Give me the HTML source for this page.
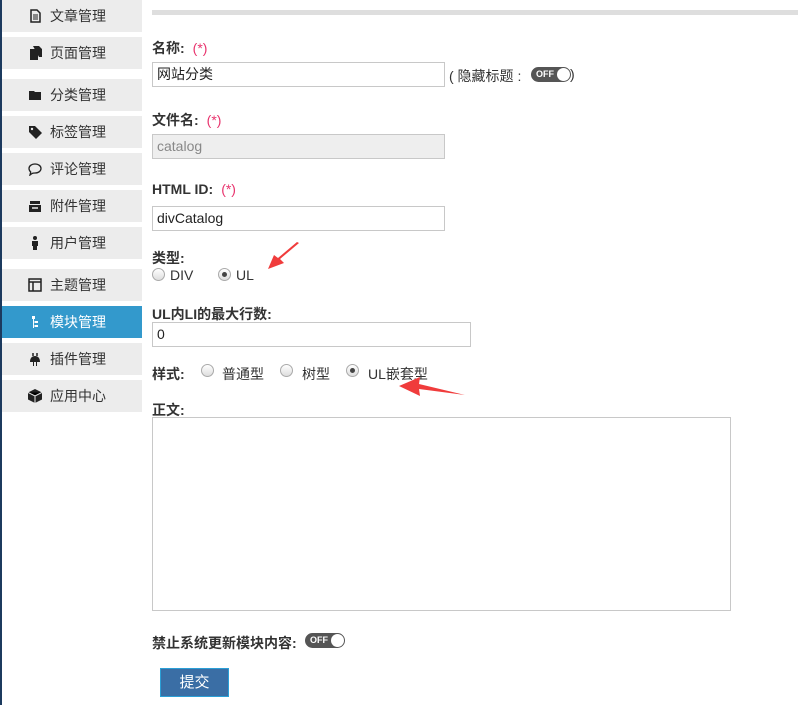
<!DOCTYPE html>
<html><head><meta charset="utf-8"><style>
*{margin:0;padding:0;box-sizing:border-box}
body{width:798px;height:705px;overflow:hidden;background:#fff;position:relative;font-family:"Liberation Sans","Noto Sans CJK SC",sans-serif;font-size:14px;color:#222}
.a{position:absolute}
.strip{left:0;top:0;width:2px;height:705px;background:#1c3a5e}
.it{position:absolute;left:2px;width:140px;height:32px;background:#ececec;font-size:14px;color:#333;line-height:32px;padding-left:48px}
.it .ic{position:absolute;left:26px;top:9px;width:14px;height:14px}
.it.on{background:#3399cc;color:#fff}
.lbl{position:absolute;left:152px;font-weight:bold;font-size:14px;color:#333}
.star{color:#e8336d;font-weight:normal;margin-left:8px}
.inp{position:absolute;left:152px;height:25px;border:1px solid #c8c8c8;background:#fff;font-size:14px;line-height:23px;padding-left:4px;color:#222}
.rad{position:absolute;width:13px;height:13px;border:1px solid #aaa;border-radius:50%;background:linear-gradient(#fff,#ddd)}
.rad.on:after{content:"";position:absolute;left:3px;top:3px;width:5px;height:5px;border-radius:50%;background:#444}
.tog{position:absolute;width:40px;height:15px;border-radius:8px;background:#555;color:#fff;font-size:9px;font-weight:bold;line-height:15px;padding-left:5px}
.tog:after{content:"";position:absolute;right:1px;top:1px;width:13px;height:13px;border-radius:50%;background:#fff}
.t{position:absolute;font-size:14px;color:#333}
</style></head><body>
<div class="a strip"></div>
<div class="a" style="left:152px;top:10px;width:646px;height:5px;background:#dedede"></div>

<div class="it" style="top:0"><svg class="ic" viewBox="0 0 14 14"><path d="M3 1h6l3 3v9H3z" fill="none" stroke="#222" stroke-width="1.5"/><path d="M5 6h5M5 8h5M5 10h5" stroke="#222"/></svg>文章管理</div>
<div class="it" style="top:37px"><svg class="ic" viewBox="0 0 14 14"><path d="M2 3h6l2 2v9H2z M5 0h6l3 3v8h-3" fill="#222"/></svg>页面管理</div>
<div class="it" style="top:79px"><svg class="ic" viewBox="0 0 14 14"><path d="M1 3h5l1 1h6v8H1z" fill="#222"/></svg>分类管理</div>
<div class="it" style="top:116px"><svg class="ic" viewBox="0 0 14 14"><path d="M1 1h6l7 7-6 6-7-7z" fill="#222"/><circle cx="4" cy="4" r="1.2" fill="#ececec"/></svg>标签管理</div>
<div class="it" style="top:153px"><svg class="ic" viewBox="0 0 14 14"><path d="M7 2c3.5 0 6 2 6 4.5S10.5 11 7 11c-1 0-2 0-3 .5L2 13l.7-3C1.6 9 1 8 1 6.5 1 4 3.5 2 7 2z" fill="none" stroke="#222" stroke-width="1.3"/></svg>评论管理</div>
<div class="it" style="top:190px"><svg class="ic" viewBox="0 0 14 14"><path d="M2 2h10v3H2zM1 6h12v7H1z" fill="#222"/><path d="M4 9h6" stroke="#ececec" stroke-width="1.5"/></svg>附件管理</div>
<div class="it" style="top:227px"><svg class="ic" viewBox="0 0 14 14"><circle cx="7" cy="2" r="2" fill="#222"/><path d="M4 5h6v5H9v4H5v-4H4z" fill="#222"/></svg>用户管理</div>
<div class="it" style="top:269px"><svg class="ic" viewBox="0 0 14 14"><path d="M1 1h12v12H1z" fill="none" stroke="#222" stroke-width="1.5"/><path d="M1 4h12M5 4v9" stroke="#222" stroke-width="1.5"/></svg>主题管理</div>
<div class="it on" style="top:306px"><svg class="ic" viewBox="0 0 14 14"><path d="M4 1h3v3H4zM7 6h3v2H7zM7 10h3v2H7z" fill="#fff"/><path d="M5.5 4v9M5.5 7h2M5.5 11h2" stroke="#fff"/></svg>模块管理</div>
<div class="it" style="top:343px"><svg class="ic" viewBox="0 0 14 14"><path d="M5 1v3M9 1v3" stroke="#222" stroke-width="1.5"/><path d="M2 10c0-4 2-6 5-6s5 2 5 6z M5 10h1v4H5zM8 10h1v4H8z" fill="#222"/></svg>插件管理</div>
<div class="it" style="top:380px"><svg class="ic" viewBox="0 0 14 14"><path d="M7 0l7 3.5v7L7 14 0 10.5v-7z" fill="#222"/><path d="M0 3.5L7 7l7-3.5M7 7v7" stroke="#ececec"/></svg>应用中心</div>

<div class="lbl" style="top:38px">名称:<span class="star">(*)</span></div>
<div class="inp" style="top:62px;width:293px">网站分类</div>
<div class="t" style="left:449px;top:66px">( 隐藏标题 :</div>
<div class="tog" style="left:531px;top:67px">OFF</div>
<div class="t" style="left:570px;top:66px">)</div>

<div class="lbl" style="top:110px">文件名:<span class="star">(*)</span></div>
<div class="inp" style="top:134px;width:293px;background:#eee;color:#888">catalog</div>

<div class="lbl" style="top:181px">HTML ID:<span class="star">(*)</span></div>
<div class="inp" style="top:206px;width:293px">divCatalog</div>

<div class="lbl" style="top:248px">类型:</div>
<span class="rad" style="left:152px;top:268px"></span><div class="t" style="left:170px;top:267px">DIV</div>
<span class="rad on" style="left:218px;top:268px"></span><div class="t" style="left:236px;top:267px">UL</div>

<div class="lbl" style="top:304px">UL内LI的最大行数:</div>
<div class="inp" style="top:322px;width:319px">0</div>

<div class="lbl" style="top:364px">样式:</div>
<span class="rad" style="left:201px;top:364px"></span><div class="t" style="left:222px;top:364px">普通型</div>
<span class="rad" style="left:280px;top:364px"></span><div class="t" style="left:302px;top:364px">树型</div>
<span class="rad on" style="left:346px;top:364px"></span><div class="t" style="left:368px;top:364px">UL嵌套型</div>

<div class="lbl" style="top:400px">正文:</div>
<div class="a" style="left:152px;top:417px;width:579px;height:194px;border:1px solid #c8c8c8"></div>

<div class="lbl" style="top:633px">禁止系统更新模块内容:</div>
<div class="tog" style="left:305px;top:633px">OFF</div>

<div class="a" style="left:160px;top:668px;width:69px;height:29px;background:#3a6ea5;border:1px solid #2a9fd6;color:#fff;font-size:15px;text-align:center;line-height:27px">提交</div>

<svg class="a" style="left:262px;top:242px" width="40" height="30"><path d="M37 1L18 17l4 4-16 6 6-14 4 3L35 0z" fill="#f03c3c"/></svg>
<svg class="a" style="left:397px;top:375px" width="70" height="25"><path d="M68 20L22 14l1 7L2 11l21-9-1 7z" fill="#f03c3c"/></svg>
</body></html>
